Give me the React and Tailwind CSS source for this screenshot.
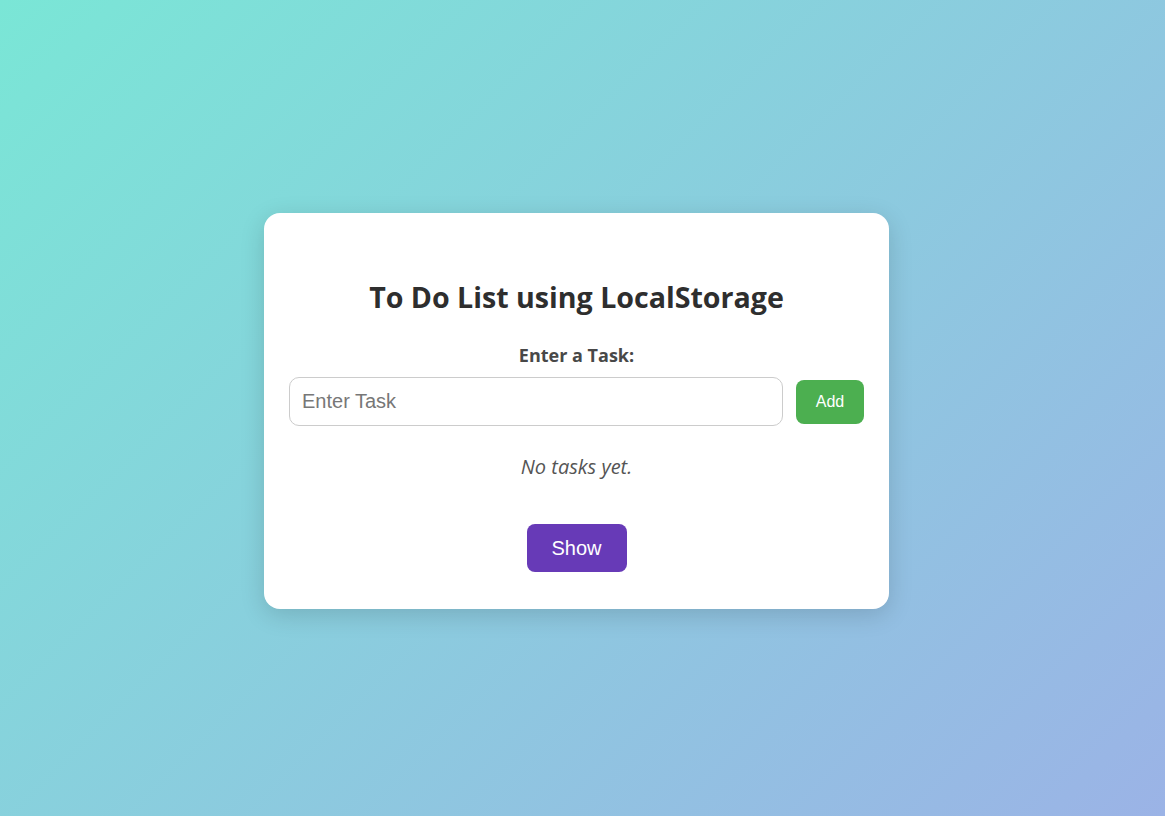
export default function App() {
  return (
    <div className="min-h-screen w-full flex items-center justify-center pr-[12px] pt-[6px] bg-[linear-gradient(135deg,#7ae6d6_0%,#9bb3e6_100%)]">
      <div className="w-[625px] bg-white rounded-[16px] shadow-[0_6px_24px_rgba(0,0,0,0.15)] px-[25px] pt-[67px] pb-[37px] flex flex-col items-center font-['Open_Sans','Noto_Sans',sans-serif]">
        <h1 className="text-[28.6px] leading-[34px] font-bold text-[#2e2e2e]">To Do List using LocalStorage</h1>
        <label className="mt-[29px] text-[18px] leading-[24px] font-bold text-[#484848]">Enter a Task:</label>
        <div className="mt-[10px] w-full flex items-center gap-[13px]">
          <input
            type="text"
            placeholder="Enter Task"
            className="flex-1 h-[49px] border border-[#cccccc] rounded-[10px] px-[12px] text-[20px] font-['Liberation_Sans',Arial,sans-serif] placeholder:text-[#777] outline-none"
          />
          <button className="w-[68px] h-[44px] rounded-[8px] bg-[#4caf50] text-white text-[16px] font-['Liberation_Sans',Arial,sans-serif]">
            Add
          </button>
        </div>
        <p className="mt-[29px] text-[20px] leading-[24px] italic text-[#555]">No tasks yet.</p>
        <button className="mt-[45px] w-[100px] h-[48px] rounded-[8px] bg-[#673ab7] text-white text-[20px] font-['Liberation_Sans',Arial,sans-serif]">
          Show
        </button>
      </div>
    </div>
  );
}
